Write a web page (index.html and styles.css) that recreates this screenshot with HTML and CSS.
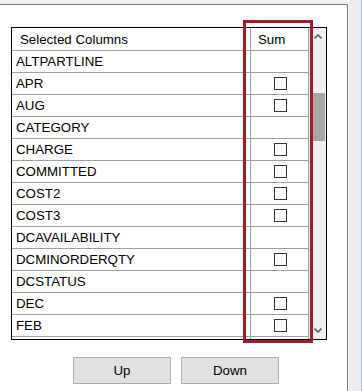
FILE: index.html
```html
<!DOCTYPE html>
<html>
<head>
<meta charset="utf-8">
<link rel="stylesheet" href="styles.css">
</head>
<body>
<div class="window">
  <div class="panel">
    <div class="list">
      <div class="grid">
        <div class="row head"><div class="name">Selected Columns</div><div class="sum">Sum</div></div>
        <div class="row"><div class="name">ALTPARTLINE</div><div class="sum"></div></div>
        <div class="row"><div class="name">APR</div><div class="sum"><span class="box"></span></div></div>
        <div class="row"><div class="name">AUG</div><div class="sum"><span class="box"></span></div></div>
        <div class="row"><div class="name">CATEGORY</div><div class="sum"></div></div>
        <div class="row"><div class="name">CHARGE</div><div class="sum"><span class="box"></span></div></div>
        <div class="row"><div class="name">COMMITTED</div><div class="sum"><span class="box"></span></div></div>
        <div class="row"><div class="name">COST2</div><div class="sum"><span class="box"></span></div></div>
        <div class="row"><div class="name">COST3</div><div class="sum"><span class="box"></span></div></div>
        <div class="row"><div class="name">DCAVAILABILITY</div><div class="sum"></div></div>
        <div class="row"><div class="name">DCMINORDERQTY</div><div class="sum"><span class="box"></span></div></div>
        <div class="row"><div class="name">DCSTATUS</div><div class="sum"></div></div>
        <div class="row"><div class="name">DEC</div><div class="sum"><span class="box"></span></div></div>
        <div class="row"><div class="name">FEB</div><div class="sum"><span class="box"></span></div></div>
        <div class="row"><div class="name"></div><div class="sum"></div></div>
      </div>
      <div class="scroll">
        <div class="arrow"><svg width="8" height="5" viewBox="0 0 8 5"><polyline points="0.5,4.5 4,1 7.5,4.5" fill="none" stroke="#606060" stroke-width="1.6"/></svg></div>
        <div class="track"><div class="thumb"></div></div>
        <div class="arrow"><svg width="8" height="5" viewBox="0 0 8 5"><polyline points="0.5,0.5 4,4 7.5,0.5" fill="none" stroke="#606060" stroke-width="1.6"/></svg></div>
      </div>
    </div>
    <div class="buttons">
      <button class="btn">Up</button>
      <button class="btn">Down</button>
    </div>
    <div class="highlight"></div>
  </div>
  <div class="edge"></div>
</div>
</body>
</html>
```
FILE: styles.css
```css
html, body {
  margin: 0;
  padding: 0;
}
body {
  background: #f0f0f0;
  width: 362px;
  height: 391px;
  overflow: hidden;
  font-family: "Liberation Sans", Arial, sans-serif;
  font-size: 13.3px;
  color: #000;
}
.window {
  display: flex;
  height: 391px;
}
.panel {
  position: relative;
  margin-top: 4px;
  width: 347px;
  height: 386px;
  background: #fff;
  border-top: 1px solid #7a7a7a;
  border-right: 1px solid #7a7a7a;
  display: flex;
  flex-direction: column;
}
.edge {
  width: 12px;
  border-left: 1px solid #ffffff;
  border-right: 1px solid #9dbfe4;
  background: #ececec;
}
.list {
  margin: 22px 0 0 11px;
  width: 314px;
  height: 311px;
  border: 1px solid #000;
  display: flex;
}
.grid {
  width: 297px;
  height: 311px;
  overflow: hidden;
  display: flex;
  flex-direction: column;
  flex: none;
}
.row {
  display: flex;
  height: 21px;
  flex: none;
  border-bottom: 1px solid #a0a0a0;
}
.row.head {
  height: 22px;
}
.name {
  width: 234px;
  padding-left: 4px;
  border-right: 1px solid #a0a0a0;
  display: flex;
  align-items: center;
  white-space: nowrap;
}
.head .name {
  width: 230px;
  padding-left: 8px;
}
.sum {
  width: 57px;
  border-right: 1px solid #a0a0a0;
  display: flex;
  align-items: center;
  justify-content: center;
}
.head .sum {
  width: 50px;
  padding-left: 7px;
  justify-content: flex-start;
}
.box {
  width: 11px;
  height: 11px;
  border: 1px solid #333;
  background: #fff;
  margin-left: 1px;
}
.scroll {
  width: 17px;
  flex: none;
  background: #f0f0f0;
  display: flex;
  flex-direction: column;
}
.arrow {
  height: 17px;
  flex: none;
  display: flex;
  align-items: center;
  justify-content: center;
}
.arrow svg {
  display: block;
}
.track {
  flex: 1;
}
.thumb {
  margin: 48px 1px 0 1px;
  height: 48px;
  background: #a6a6a6;
}
.buttons {
  display: flex;
  gap: 10px;
  margin: 17px 0 0 73px;
}
.btn {
  width: 98px;
  height: 27px;
  margin: 0;
  padding: 0;
  background: #e1e1e1;
  border: 1px solid #adadad;
  border-radius: 0;
  font-family: "Liberation Sans", Arial, sans-serif;
  font-size: 13.3px;
  color: #000;
}
.highlight {
  position: absolute;
  left: 243px;
  top: 15px;
  width: 70px;
  height: 323px;
  box-sizing: border-box;
  border: 3px solid #a31c25;
  pointer-events: none;
}
```
